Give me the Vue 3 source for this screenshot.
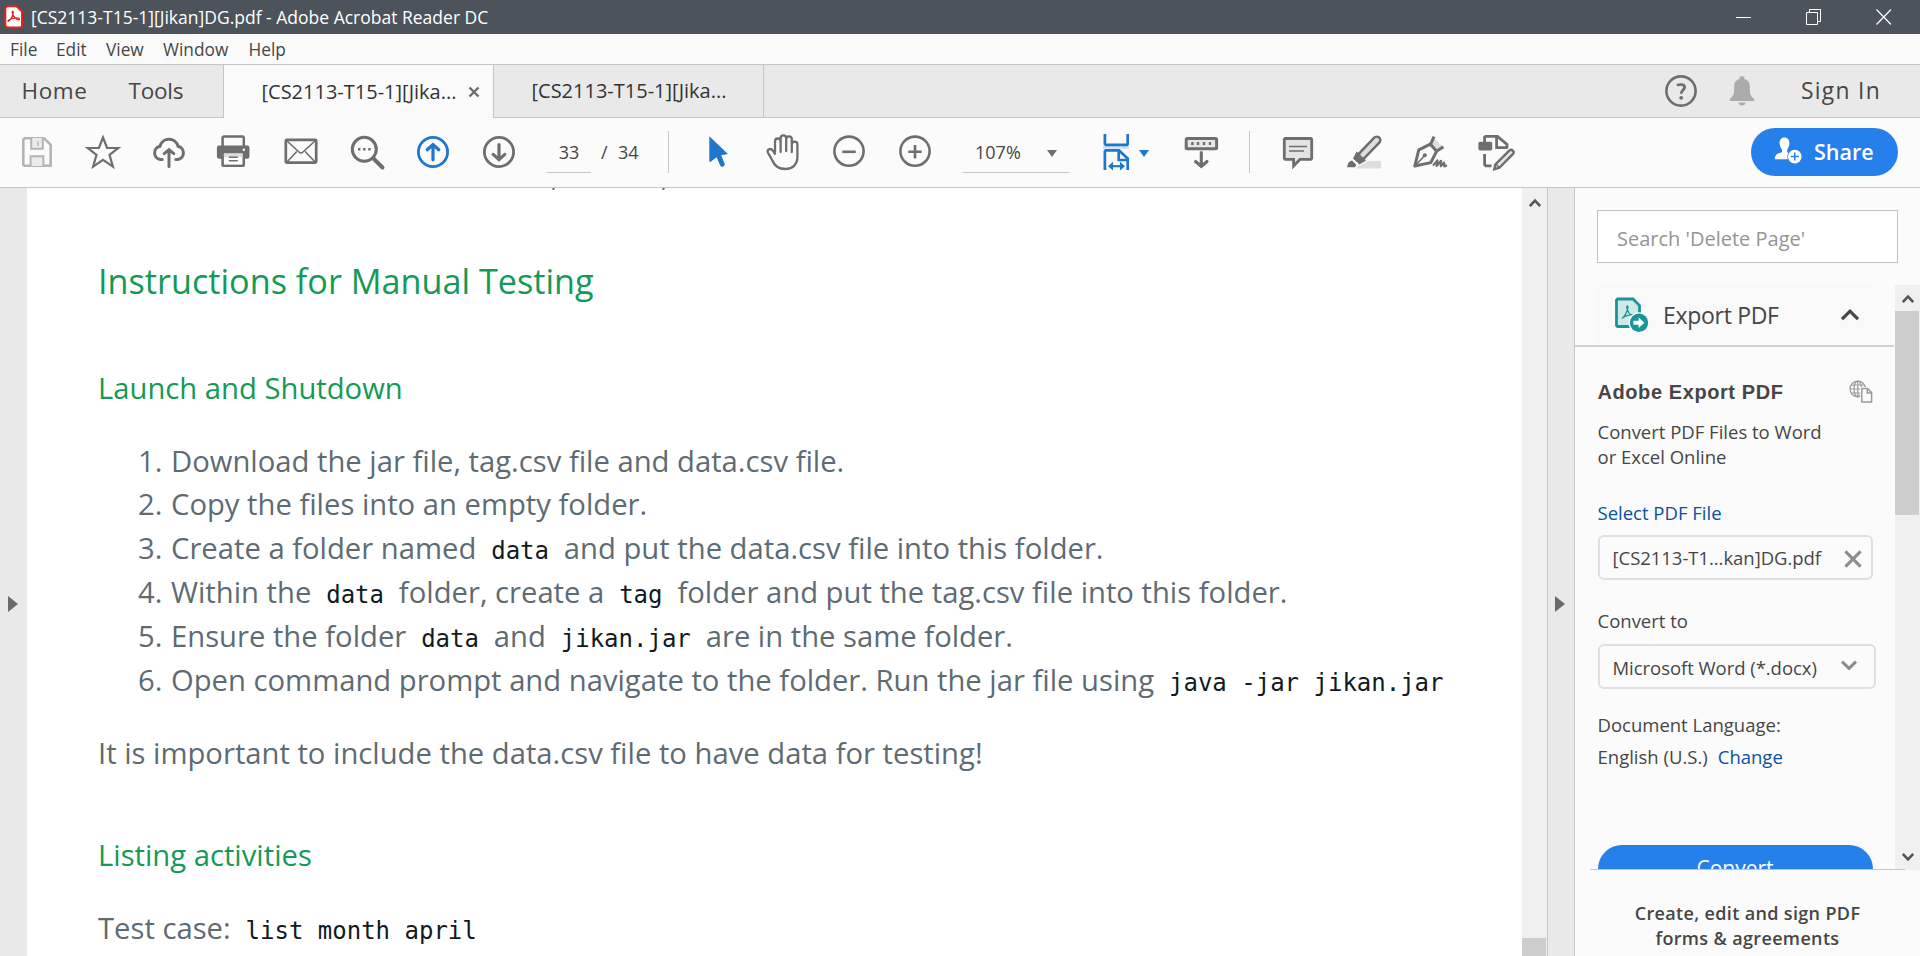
<script setup>
const menus = [
  { label: 'File', cls: 'm-file' },
  { label: 'Edit', cls: 'm-edit' },
  { label: 'View', cls: 'm-view' },
  { label: 'Window', cls: 'm-window' },
  { label: 'Help', cls: 'm-help' },
]

const steps = [
  [{ t: 'Download the jar file, tag.csv file and data.csv file.' }],
  [{ t: 'Copy the files into an empty folder.' }],
  [{ t: 'Create a folder named ' }, { c: 'data' }, { t: ' and put the data.csv file into this folder.' }],
  [{ t: 'Within the ' }, { c: 'data' }, { t: ' folder, create a ' }, { c: 'tag' }, { t: ' folder and put the tag.csv file into this folder.' }],
  [{ t: 'Ensure the folder ' }, { c: 'data' }, { t: ' and ' }, { c: 'jikan.jar' }, { t: ' are in the same folder.' }],
  [{ t: 'Open command prompt and navigate to the folder. Run the jar file using ' }, { c: 'java -jar jikan.jar' }],
]
</script>

<template>
  <div class="app">
    <header class="titlebar">
      <svg class="appicon" width="20" height="24" viewBox="0 0 20 24">
        <path d="M4 1.2H12.5L18 6.5V20a2.5 2.5 0 0 1-2.5 2.5H4A2.5 2.5 0 0 1 1.3 20V4A2.7 2.7 0 0 1 4 1.2z" fill="#fff" stroke="#e2231a" stroke-width="2" />
        <path d="M4.6 16.2C6.5 15 9.8 10 9.2 6.8C8.8 5.6 7.8 6.6 8.4 8.4C9.2 11.2 12 14.8 14.6 14.9C16.2 14.6 15.6 13 13 12.9C10.6 12.8 7 13.6 4.9 15C3.6 16 3.9 16.8 4.6 16.2z" fill="none" stroke="#e2231a" stroke-width="1.3" />
      </svg>
      <span class="title">[CS2113-T15-1][Jikan]DG.pdf - Adobe Acrobat Reader DC</span>
      <div class="wincontrols">
        <svg width="16" height="16" viewBox="0 0 16 16"><path d="M0 8.5H15" stroke="#fff" fill="none" /></svg>
        <svg width="16" height="16" viewBox="0 0 16 16"><path d="M.5 3.5H11.5V15.5H.5zM3.5 3.5V.5H14.5V12.5H11.5" stroke="#fff" fill="none" /></svg>
        <svg width="16" height="16" viewBox="0 0 16 16"><path d="M.5 .5L15 15.5M15 .5L.5 15.5" stroke="#fff" stroke-width="1.2" fill="none" /></svg>
      </div>
    </header>

    <nav class="menubar">
      <span v-for="m in menus" :key="m.label" :class="m.cls">{{ m.label }}</span>
    </nav>

    <div class="tabs">
      <div class="maintabs"><span class="home">Home</span><span class="tools">Tools</span></div>
      <div class="tab active">
        <span>[CS2113-T15-1][Jika...</span>
        <svg width="12" height="12" viewBox="0 0 12 12"><path d="M1.5 1.5L10.5 10.5M10.5 1.5L1.5 10.5" stroke="#6a6a6a" stroke-width="2.4" /></svg>
      </div>
      <div class="tab"><span>[CS2113-T15-1][Jika...</span></div>
      <div class="account">
        <svg class="help" width="34" height="34" viewBox="0 0 34 34">
          <circle cx="17" cy="17" r="14.6" fill="none" stroke="#6e6e6e" stroke-width="2.6" />
          <path d="M13 11.6C14.3 10.4 20.6 9.3 20.6 13.2C20.6 16 17.2 16.2 17.2 19.8" fill="none" stroke="#6e6e6e" stroke-width="2.7" />
          <circle cx="17.2" cy="23.8" r="1.9" fill="#6e6e6e" />
        </svg>
        <svg class="bell" width="26" height="30" viewBox="0 0 26 30">
          <path d="M10.7 3V.6H15.3V3C19.5 4 20.8 7 20.8 10.5C20.8 17 21 19.5 25.3 23.2V25H.7V23.2C5 19.5 5.2 17 5.2 10.5C5.2 7 6.5 4 10.7 3zM9.3 26.4H16.7C16.2 30.2 9.8 30.2 9.3 26.4z" fill="#ababab" />
        </svg>
        <span class="signin">Sign In</span>
      </div>
    </div>

    <div class="toolbar">
      <div class="cell">
        <svg viewBox="0 0 40 40">
          <path d="M7.6 6.3H27.2L33.7 12.8V33.7H7.2L6.3 32.8V7.6z" fill="none" stroke="#b4b4b4" stroke-width="2.6" stroke-linejoin="round" />
          <path d="M14.2 6V16.7H25.8V6M13.6 34V24.3H26.4V34" fill="#ebebeb" stroke="#b4b4b4" stroke-width="2" /><path d="M21 9.5V14" stroke="#b4b4b4" stroke-width="1.4" />
        </svg>
      </div>
      <div class="cell">
        <svg viewBox="0 0 40 40"><path d="M20 5.5L24.1 16H35.2L26.5 22.9L29.9 34.6L20 27.9L10.1 34.6L13.5 22.9L4.8 16H15.9z" fill="none" stroke="#6e6e6e" stroke-width="2.2" /></svg>
      </div>
      <div class="cell">
        <svg viewBox="0 0 40 40" fill="none" stroke="#6e6e6e" stroke-width="3" stroke-linecap="round">
          <path d="M13.2 27.6H11.5A6.8 6.8 0 0 1 11 14.2A9.3 9.3 0 0 1 29 14.2A6.8 6.8 0 0 1 28.5 27.6H26.8" /><path d="M20 34.6V18.5M15.2 21.6L20 17.6L24.8 21.6" />
        </svg>
      </div>
      <div class="cell">
        <svg viewBox="0 0 40 40">
          <path d="M7.6 15V5.6L8.7 4.4H27.7L28.8 5.6V15" fill="none" stroke="#6e6e6e" stroke-width="2.5" />
          <path d="M4.3 13.5H32.3A2.2 2.2 0 0 1 34.5 15.7V24.5A2.2 2.2 0 0 1 32.3 26.7H30V33A2 2 0 0 1 28 35H8.3A2 2 0 0 1 6.3 33V26.7H4.1A2.2 2.2 0 0 1 1.9 24.5V15.7A2.2 2.2 0 0 1 4.3 13.5z" fill="#6e6e6e" />
          <path d="M8.9 21.5H27.5V32.6H8.9z" fill="#fff" /><path d="M8.9 21.5H27.5V25H8.9z" fill="#dcdcdc" />
          <path d="M13.8 25.3H22.8M13.8 28.7H22.8" stroke="#6e6e6e" stroke-width="1.4" /><circle cx="28.8" cy="17.8" r="1.2" fill="#fff" />
        </svg>
      </div>
      <div class="cell">
        <svg viewBox="0 0 40 40" fill="none" stroke="#6e6e6e">
          <rect x="4.8" y="7.8" width="30.4" height="22.8" rx="1" stroke-width="2.7" /><path d="M6 9L18 20Q20 22 22 20L34 9M6 30L15.8 19.5M34 30L24.2 19.5" stroke-width="1.6" />
        </svg>
      </div>
      <div class="cell">
        <svg viewBox="0 0 40 40" fill="none" stroke="#6e6e6e">
          <circle cx="17.3" cy="17.3" r="12" stroke-width="3" /><path d="M26.3 26.3L35.5 35.5" stroke-width="4" stroke-linecap="round" />
          <path d="M11 17.3H13.4M16.1 17.3H18.5M21.2 17.3H23.6" stroke-width="2.6" />
        </svg>
      </div>
      <div class="cell">
        <svg viewBox="0 0 40 40" fill="none" stroke="#1f76cd" stroke-linecap="round"><circle cx="20" cy="20" r="14.6" stroke-width="2.8" /><path d="M20 27.8V13M14.2 17.8L20 12.6L25.8 17.8" stroke-width="3.2" /></svg>
      </div>
      <div class="cell">
        <svg viewBox="0 0 40 40" fill="none" stroke="#6e6e6e" stroke-linecap="round"><circle cx="20" cy="20" r="14.6" stroke-width="2.8" /><path d="M20 12.5V27M14.2 22.4L20 27.6L25.8 22.4" stroke-width="3.2" /></svg>
      </div>
      <div class="pagefield">33</div>
      <div class="pagetotal"><span>/</span><span>34</span></div>
      <div class="sep"></div>
      <div class="cell cursor">
        <svg viewBox="0 0 40 40"><path d="M12.3 4.2L31 22L24.2 23.2L27.6 31.8Q28 34.2 25.6 34.6Q23.8 34.8 23.2 33.4L19.6 25.2L14 29.6Q12.3 30.6 12.3 28.6z" fill="#1f76cd" /></svg>
      </div>
      <div class="cell">
        <svg viewBox="0 0 40 40" fill="none" stroke="#6e6e6e" stroke-width="2.3" stroke-linecap="round">
          <path d="M12 20V9.3A2.8 2.8 0 0 1 17.6 9.3V20M17.6 19V6.2A2.8 2.8 0 0 1 23.2 6.2V19M23.2 18V7.2A2.8 2.8 0 0 1 28.8 7.2V20M28.8 12.5A2.7 2.7 0 0 1 34.4 12.5V25C34.4 32 30 37 22.4 37C16 37 11.5 34 9.4 28.5L5 20.8C3.6 17.4 7.6 15.6 9.6 18.4L12 21.8" />
        </svg>
      </div>
      <div class="cell">
        <svg viewBox="0 0 40 40" fill="none" stroke="#6e6e6e"><circle cx="20" cy="19.2" r="14.6" stroke-width="2.6" /><path d="M13.3 19.8H26.7" stroke-width="2.6" /></svg>
      </div>
      <div class="cell">
        <svg viewBox="0 0 40 40" fill="none" stroke="#6e6e6e"><circle cx="20" cy="19.2" r="14.6" stroke-width="2.6" /><path d="M13.3 19.8H26.7M20 13.1V26.5" stroke-width="2.6" /></svg>
      </div>
      <div class="zoomfield"><span>107%</span><i class="caret"></i></div>
      <div class="fit">
        <svg viewBox="0 0 40 40" fill="none" stroke="#1f76cd" stroke-width="2.7">
          <path d="M7 15.2H33" stroke="#cfe0f5" stroke-width="3" /><path d="M8.9 2V12L9.8 12.8H31L31.7 12V2" />
          <path d="M8.9 38V19.2L9.8 18.4H23L31.7 26.5V38M22.7 18.4V28H31.7" />
          <path d="M14 34.2H27" stroke-width="2.2" /><path d="M12 34.2L17 29.8V38.6zM29 34.2L24 29.8V38.6z" fill="#1f76cd" stroke="none" />
        </svg>
        <i class="caret blue"></i>
      </div>
      <div class="cell read">
        <svg viewBox="0 0 40 40" fill="none" stroke="#6e6e6e">
          <rect x="5.2" y="6.4" width="30.4" height="10.4" rx="1" fill="#e8e8e8" stroke-width="3" /><path d="M10.2 11.6H12.6M15.8 11.6H18.2M21.8 11.6H24.2M27.8 11.6H30.2" stroke-width="3" />
          <path d="M20.3 20.5V34M14.6 29.5L20.3 34.5L26 29.5" stroke-width="3.1" stroke-linecap="round" />
        </svg>
      </div>
      <div class="sep sep2"></div>
      <div class="cell comment">
        <svg viewBox="0 0 40 40"><path d="M7.2 6.5H32.8L33.7 7.4V26.4L32.8 27.3H22L15.6 34V27.3H7.2L6.3 26.4V7.4z" fill="#e4e4e4" stroke="#6e6e6e" stroke-width="2.8" /><path d="M11 14.4H29M11 19H26" stroke="#6e6e6e" stroke-width="1.5" /></svg>
      </div>
      <div class="cell">
        <svg viewBox="0 0 40 40">
          <path d="M24 29H37V36.5H11z" fill="#dedede" /><path d="M32.8 8.2L17.5 24" stroke="#6e6e6e" stroke-width="9.6" stroke-linecap="round" /><path d="M32.8 8.2L18.5 23" stroke="#dedede" stroke-width="4.6" stroke-linecap="round" />
          <path d="M12.5 19.5L22 28.5L15.5 32.6L9 26.4zM3 35.2Q4 29.4 8 28.6L12.4 32.8L11 35.2z" fill="#6e6e6e" />
        </svg>
      </div>
      <div class="cell">
        <svg viewBox="0 0 40 40" fill="none" stroke="#6e6e6e">
          <path d="M23 5L33 15L28 19L20.5 11.5z" fill="#dedede" stroke="none" />
          <path d="M24 4.6L20.8 11.8L8.8 17.8L4.8 34L20.8 30.6L26.6 19.2L33.4 14.8M19.8 11.4L27.2 20" stroke-width="3" stroke-linejoin="round" />
          <path d="M5 34L14.2 24" stroke-width="1.6" /><circle cx="14.8" cy="23.2" r="2" fill="#6e6e6e" stroke="none" />
          <path d="M23 33.6L27.4 28.4L26.6 34L31 28.8L30.8 34.2L34 30.6L34.4 34.4L37 33.2" stroke-width="2.2" stroke-linejoin="round" />
        </svg>
      </div>
      <div class="cell">
        <svg viewBox="0 0 40 40" fill="none" stroke="#6e6e6e">
          <path d="M8.6 10V5.2L9.6 4.4H21.5L31 12.5V15.6H20.6V4.4" stroke-width="2.8" />
          <rect x="2.4" y="9.8" width="13.8" height="8.6" rx="1.6" fill="#6e6e6e" stroke="none" /><path d="M8.6 22V32.6L9.8 33.8H15.5" stroke-width="2.8" />
          <path d="M33.2 18.6A2.4 2.4 0 0 1 36.8 22.2L23.4 35.8L18.3 37.2L19.4 32.4z" fill="#e4e4e4" stroke="#fbfbfb" stroke-width="5" />
          <path d="M33.2 18.6A2.4 2.4 0 0 1 36.8 22.2L23.4 35.8L18.3 37.2L19.4 32.4z" fill="#e4e4e4" stroke-width="2.4" /><path d="M19.8 32L23.8 36" stroke-width="1.5" />
        </svg>
      </div>
      <div class="sharebtn">
        <svg width="30" height="36" viewBox="0 0 30 36">
          <path d="M10.4 3.5C14 3.5 15.6 6.2 15.4 9.6C15.3 12.2 14.2 14.3 13.2 15.6V18.2C14.4 19 16.4 19.5 17.4 20.4Q13.9 23 14.4 25.2L.8 25.2C1 21 2.9 19.5 8 18.2V15.6C6.8 14.3 5.8 12.2 5.6 9.6C5.4 6.2 7 3.5 10.4 3.5z" fill="#fff" />
          <circle cx="20.8" cy="22.4" r="7.6" fill="#2680eb" /><circle cx="20.8" cy="22.6" r="6.8" fill="#fff" /><path d="M20.8 18.6V26.6M16.8 22.6H24.8" stroke="#2680eb" stroke-width="1.5" />
        </svg>
        <span>Share</span>
      </div>
    </div>

    <main class="content">
      <div class="gutter left"><i class="tri"></i></div>
      <article class="doc">
        <div class="cutline"><span>,</span><span>,</span></div>
        <h1>Instructions for Manual Testing</h1>
        <h2>Launch and Shutdown</h2>
        <div class="steps">
          <p v-for="(s, i) in steps" :key="i"><span class="no">{{ i + 1 }}.</span><template v-for="(p, j) in s" :key="j"><code v-if="p.c">{{ p.c }}</code><span v-else>{{ p.t }}</span></template></p>
        </div>
        <p class="note">It is important to include the data.csv file to have data for testing!</p>
        <h2 class="listing">Listing activities</h2>
        <p class="testcase">Test case: <code>list month april</code></p>
      </article>
      <div class="docscroll">
        <svg width="12" height="10" viewBox="0 0 12 10"><path d="M.8 8L6 2.6L11.2 8" fill="none" stroke="#555" stroke-width="2.6" /></svg>
        <div class="docthumb"></div>
      </div>
      <div class="gutter right"><i class="tri"></i></div>
      <aside class="panel">
        <div class="search">Search 'Delete Page'</div>
        <div class="scrollrow">
          <div class="scrollbody">
            <div class="exporthead">
              <div class="exportinner">
                <svg width="36" height="38" viewBox="0 0 36 38">
                  <path d="M3.5 3H19L25.5 9.5V30.5H3.5L2.5 29.5V4z" fill="#cfe8e8" stroke="#1a9599" stroke-width="2.8" />
                  <path d="M8 22.4C10.5 21 14.6 13.5 13.8 10.4C13.2 9.2 12.4 10.4 12.9 12.4C14 16 16.5 19.8 19.5 20.6M9 21.5C12 19.2 16 18.4 19.4 18.6" fill="none" stroke="#1a9599" stroke-width="1.3" />
                  <circle cx="25" cy="26.8" r="10.6" fill="#fafafa" /><circle cx="25" cy="26.8" r="9.2" fill="#1a9599" />
                  <path d="M19.4 24.8H24.6V21.6L30.4 26.8L24.6 32V28.8H19.4z" fill="#fff" />
                </svg>
                <span>Export PDF</span>
                <svg class="chev" width="20" height="14" viewBox="0 0 20 14"><path d="M2 11.2L10 3.2L18 11.2" fill="none" stroke="#464646" stroke-width="3.2" /></svg>
              </div>
            </div>
            <div class="exportbody">
              <div class="ptitle">
                <span>Adobe Export PDF</span>
                <svg width="24" height="24" viewBox="0 0 24 24" fill="none" stroke="#9a9a9a" stroke-width="1.2">
                  <circle cx="8.8" cy="9" r="7.8" /><ellipse cx="8.8" cy="9" rx="3.8" ry="7.8" /><path d="M8.8 1V17M1 9H17M2.2 5H15.4M2.2 13H12" />
                  <path d="M12.8 8.6H18.6L22.6 12.6V22H12.8z" fill="#fbfbfb" stroke="#fbfbfb" stroke-width="3.4" /><path d="M12.8 8.6H18.6L22.6 12.6V22H12.8zM18.3 8.8V12.9H22.4" stroke-width="1.5" />
                </svg>
              </div>
              <div class="pdesc">Convert PDF Files to Word<br />or Excel Online</div>
              <div class="link select">Select PDF File</div>
              <div class="box filebox"><span>[CS2113-T1...kan]DG.pdf</span><svg width="18" height="18" viewBox="0 0 18 18"><path d="M1.4 1.4L16.6 16.6M16.6 1.4L1.4 16.6" stroke="#8c8c8c" stroke-width="3" /></svg></div>
              <div class="row convto">Convert to</div>
              <div class="box formatbox"><span>Microsoft Word (*.docx)</span><svg width="16" height="11" viewBox="0 0 16 11"><path d="M1 1.6L8 8.4L15 1.6" fill="none" stroke="#8c8c8c" stroke-width="3" /></svg></div>
              <div class="row lang">Document Language:</div>
              <div class="row english"><span>English (U.S.)</span><span class="link">Change</span></div>
              <div class="convert">Convert</div>
            </div>
          </div>
          <div class="pscroll">
            <svg width="12" height="10" viewBox="0 0 12 10"><path d="M.8 8L6 2.6L11.2 8" fill="none" stroke="#555" stroke-width="2.6" /></svg>
            <div class="pthumb"></div>
            <svg class="down" width="12" height="10" viewBox="0 0 12 10"><path d="M.8 2L6 7.4L11.2 2" fill="none" stroke="#555" stroke-width="2.6" /></svg>
          </div>
        </div>
        <footer class="pfoot">Create, edit and sign PDF<br />forms &amp; agreements</footer>
      </aside>
    </main>
  </div>
</template>

<style>
html, body { margin: 0; overflow: hidden; }
</style>

<style scoped>
* { box-sizing: border-box; }
.app { width: 1920px; height: 956px; display: flex; flex-direction: column; overflow: hidden; background: #fbfbfb; color: #464646; font-family: 'Open Sans', 'Noto Sans', sans-serif; white-space: nowrap; }
svg { display: block; flex: none; }

.titlebar { height: 34px; flex: none; background: #4c535a; display: flex; align-items: center; color: #fff; padding: 0 28px 0 4px; }
.appicon { margin-top: -1px; }
.title { font-size: 17.5px; line-height: 34px; margin-left: 7px; }
.wincontrols { margin-left: auto; display: flex; gap: 54px; }
.wincontrols svg { margin-top: -1px; }

.menubar { height: 30px; flex: none; display: flex; font-size: 17.3px; line-height: 31px; padding-left: 10px; background: #fafafa; }
.m-file { width: 46px; }
.m-edit { width: 50px; }
.m-view { width: 57px; }
.m-window { width: 85.5px; }

.tabs { height: 54px; flex: none; display: flex; border-top: 1px solid #c6c6c6; background: #e9e9e9; }
.maintabs { width: 224px; display: flex; font-size: 22.5px; line-height: 52px; border-right: 1px solid #c6c6c6; border-bottom: 1px solid #c6c6c6; padding-left: 21.5px; }
.home { width: 107px; letter-spacing: .6px; }
.tools { letter-spacing: -.2px; }
.tab { width: 270px; display: flex; align-items: center; font-size: 20px; line-height: 52px; color: #333; padding-left: 37.5px; border-right: 1px solid #c6c6c6; border-bottom: 1px solid #c6c6c6; }
.tab.active { background: #fafafa; border-bottom: 0; }
.tab.active svg { margin-left: 12px; }
.account { flex: 1; display: flex; align-items: center; justify-content: flex-end; border-bottom: 1px solid #c6c6c6; padding-right: 37px; }
.bell { margin-left: 31.5px; }
.signin { font-size: 22.8px; font-weight: 500; letter-spacing: 1.3px; line-height: 52px; margin-left: 46px; width: 82px; }

.toolbar { height: 70px; flex: none; display: flex; padding: 14px 22px 0 4px; border-bottom: 1px solid #c6c6c6; font-size: 18px; }
.cell { width: 66px; flex: none; display: flex; justify-content: center; }
.cell svg, .fit svg { width: 40px; height: 40px; }
.pagefield { width: 44px; height: 41px; margin-left: 15px; border-bottom: 1px solid #c6c6c6; text-align: center; line-height: 40px; }
.pagetotal { display: flex; gap: 9px; width: 77px; line-height: 40px; padding-left: 10px; }
.pagetotal span:first-child { width: 8px; }
.sep { width: 1px; height: 42px; margin-top: -1px; background: #c6c6c6; }
.cursor { margin-left: 15px; }
.zoomfield { width: 106px; height: 41px; margin-left: 15px; border-bottom: 1px solid #c6c6c6; line-height: 40px; padding-left: 12px; display: flex; align-items: center; }
.caret { width: 0; height: 0; border: 5.5px solid transparent; border-top: 7px solid #6e6e6e; border-bottom: 0; margin-left: 26px; margin-top: 2px; }
.fit { display: flex; align-items: center; height: 40px; width: 60px; margin-left: 27px; }
.caret.blue { border-top-color: #1f76cd; margin-left: 3px; }
.read { margin-left: 12px; }
.sep2 { margin-left: 15px; }
.comment { margin-left: 15px; }
.sharebtn { width: 147px; height: 48px; margin-left: auto; margin-top: -4px; border-radius: 24px; background: #2680eb; color: #fff; display: flex; align-items: center; font-size: 21.5px; font-weight: 600; padding-left: 23px; line-height: 48px; }
.sharebtn span { margin-left: 10px; }

.content { flex: 1; display: flex; min-height: 0; }
.gutter { background: #e9e9e9; flex: none; display: flex; align-items: center; }
.gutter.left { width: 27px; padding-left: 8px; padding-top: 63px; }
.gutter.right { width: 28px; border-left: 1px solid #c6c6c6; border-right: 1px solid #c6c6c6; padding-left: 7px; padding-top: 63px; }
.tri { width: 0; height: 0; border: 8px solid transparent; border-left: 10px solid #6a6a6a; border-right: 0; }

.doc { width: 1495px; flex: none; background: #fff; padding-left: 71px; color: #5e6b73; font-size: 29.22px; overflow: hidden; }
.cutline { height: 68px; overflow: hidden; line-height: 44px; display: flex; padding-left: 453px; }
.cutline span { margin-top: -35px; width: 110px; }
h1, h2, p { margin: 0; font-weight: 400; }
h1 { font-size: 34.2px; line-height: 50px; color: #159957; }
h2 { font-size: 29.22px; line-height: 44px; color: #159957; margin-top: 60px; }
.steps { margin-top: 29.6px; padding-left: 40px; }
.steps p { line-height: 43.9px; height: 43.9px; white-space: pre; }
.no { margin-right: 8.6px; }
code { font: 24px/1 'DejaVu Sans Mono', monospace; color: #111a21; padding: 0 7.3px; }
.note { line-height: 44px; margin-top: 28px; }
h2.listing { margin-top: 58px; }
.testcase { line-height: 44px; margin-top: 29px; }

.docscroll { width: 25px; flex: none; background: #f0f0f0; display: flex; flex-direction: column; padding: 10px 1px 0 0; }
.docscroll svg { margin-left: 6.5px; }
.docthumb { margin-top: auto; height: 18px; background: #cdcdcd; }

.panel { flex: 1; display: flex; flex-direction: column; background: #fbfbfb; font-size: 18.5px; }
.search { width: 301px; height: 53px; margin: 22px 0 0 22px; flex: none; border: 1px solid #c2c2c2; background: #fff; color: #959595; font-size: 20px; line-height: 56px; padding-left: 19px; }
.scrollrow { height: 585px; margin-top: 22px; flex: none; display: flex; overflow: hidden; position: relative; }
.scrollrow::after { content: ''; position: absolute; left: 15px; right: 15px; bottom: 0; height: 1px; background: #c6c6c6; }
.scrollbody { width: 319px; flex: none; }
.exporthead { height: 62px; border-bottom: 2px solid #d2d2d2; padding-left: 22px; }
.exportinner { width: 275px; height: 60px; background: #f9f9f9; display: flex; align-items: center; padding-left: 17px; font-size: 23px; letter-spacing: -.3px; }
.exportinner span { margin-left: 13px; line-height: 60px; }
.chev { margin-left: auto; margin-right: 12px; }
.exportbody { padding-left: 22.5px; }
.ptitle { margin-top: 33px; font: bold 20px/24px 'Liberation Sans', Arial, sans-serif; letter-spacing: .58px; display: flex; height: 24px; }
.ptitle svg { margin-left: auto; margin-right: 21px; }
.pdesc { margin-top: 15px; line-height: 25px; }
.link { color: #0b50a0; }
.select { margin-top: 31px; line-height: 25px; }
.box { border: 2px solid #dfdfdf; border-radius: 6px; display: flex; align-items: center; padding-left: 13px; }
.filebox { width: 275px; height: 45px; margin-top: 10px; line-height: 42px; letter-spacing: -.04px; }
.filebox svg { margin-left: auto; margin-right: 9px; margin-top: 2px; }
.row { line-height: 25px; }
.convto { margin-top: 28px; }
.formatbox { width: 278px; height: 45px; margin-top: 11px; line-height: 43px; letter-spacing: -.04px; }
.formatbox span { padding-top: 1px; }
.formatbox svg { margin-left: auto; margin-right: 17px; margin-top: -3px; }
.lang { margin-top: 23px; }
.english { margin-top: 7px; display: flex; gap: 10px; }
.convert { width: 275px; height: 48px; margin-top: 76px; border-radius: 24px; background: #2680eb; color: #fff; text-align: center; font-size: 21px; line-height: 46px; }
.pscroll { flex: 1; background: #f0f0f0; margin-left: 1px; padding: 9px 1px 0 0; display: flex; flex-direction: column; }
.pscroll svg { margin-left: 6.5px; }
.pthumb { height: 204px; margin-top: 7px; background: #cdcdcd; }
.pscroll .down { margin-top: auto; margin-bottom: 8px; }
.pfoot { padding-top: 31px; text-align: center; font-weight: 600; font-size: 18px; letter-spacing: .35px; line-height: 25px; }
</style>
